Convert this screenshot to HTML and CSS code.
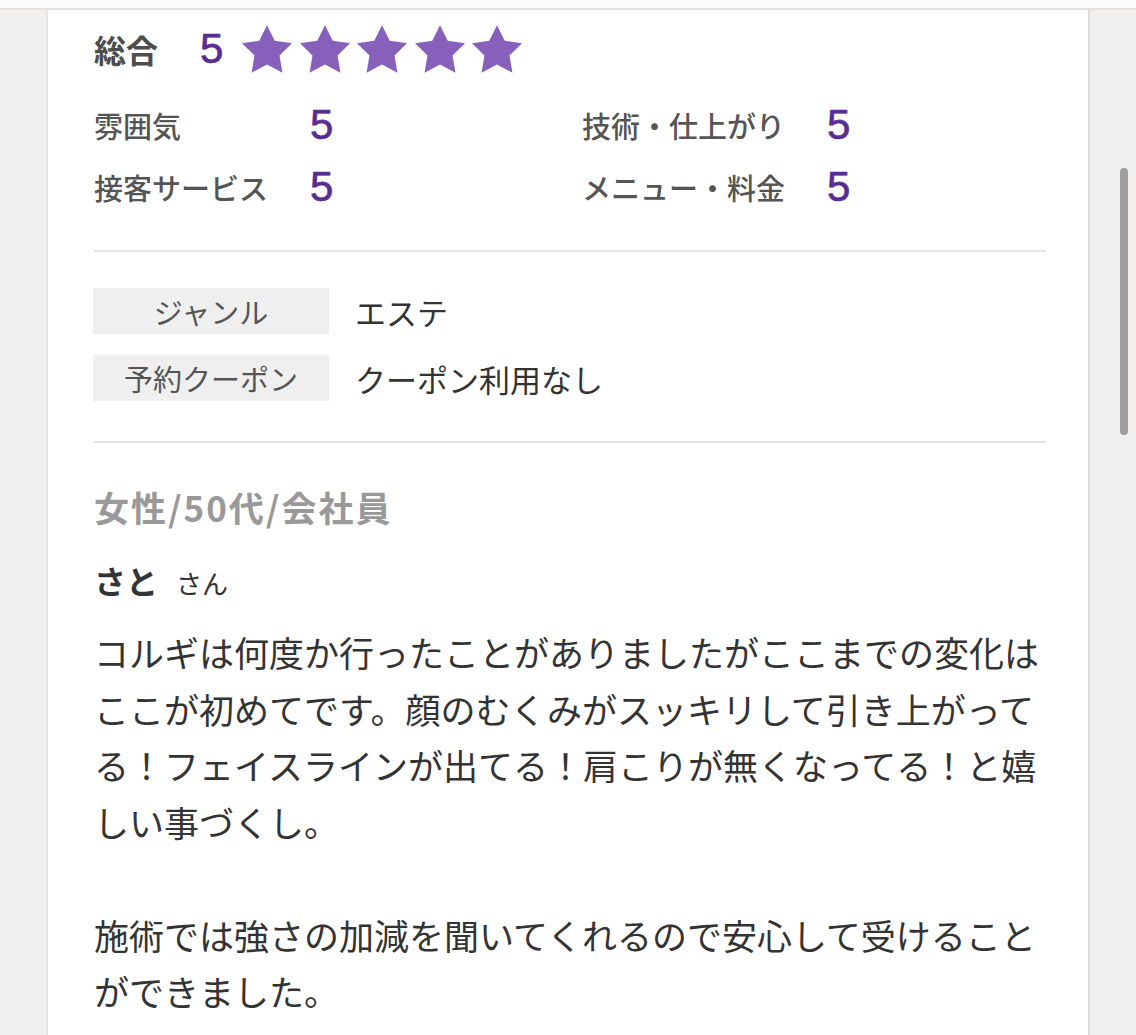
FILE: index.html
```html
<!DOCTYPE html>
<html lang="ja">
<head>
<meta charset="utf-8">
<title>口コミ</title>
<link rel="stylesheet" href="styles.css">
</head>
<body>
<div class="topbar"></div>
<div class="frame">
  <div class="gutter"></div>
  <main class="card">
    <div class="overall">
      <span class="overall-label">総合</span>
      <span class="score score-overall">5</span>
      <span class="stars">
        <svg class="star" viewBox="2 2 20 19.1"><polygon points="12,2 15.09,8.26 22,9.27 17,14.14 18.18,21.02 12,17.77 5.82,21.02 7,14.14 2,9.27 8.91,8.26"/></svg>
        <svg class="star" viewBox="2 2 20 19.1"><polygon points="12,2 15.09,8.26 22,9.27 17,14.14 18.18,21.02 12,17.77 5.82,21.02 7,14.14 2,9.27 8.91,8.26"/></svg>
        <svg class="star" viewBox="2 2 20 19.1"><polygon points="12,2 15.09,8.26 22,9.27 17,14.14 18.18,21.02 12,17.77 5.82,21.02 7,14.14 2,9.27 8.91,8.26"/></svg>
        <svg class="star" viewBox="2 2 20 19.1"><polygon points="12,2 15.09,8.26 22,9.27 17,14.14 18.18,21.02 12,17.77 5.82,21.02 7,14.14 2,9.27 8.91,8.26"/></svg>
        <svg class="star" viewBox="2 2 20 19.1"><polygon points="12,2 15.09,8.26 22,9.27 17,14.14 18.18,21.02 12,17.77 5.82,21.02 7,14.14 2,9.27 8.91,8.26"/></svg>
      </span>
    </div>
    <div class="subratings">
      <div class="subcol subcol-left">
        <span class="sub-label">雰囲気</span><span class="score">5</span>
        <span class="sub-label">接客サービス</span><span class="score">5</span>
      </div>
      <div class="subcol">
        <span class="sub-label">技術・仕上がり</span><span class="score">5</span>
        <span class="sub-label">メニュー・料金</span><span class="score">5</span>
      </div>
    </div>
    <hr class="divider divider-first">
    <dl class="info">
      <div class="info-row"><dt class="info-label">ジャンル</dt><dd class="info-value">エステ</dd></div>
      <div class="info-row"><dt class="info-label">予約クーポン</dt><dd class="info-value">クーポン利用なし</dd></div>
    </dl>
    <hr class="divider divider-second">
    <p class="profile">女性/50代/会社員</p>
    <p class="reviewer"><span class="reviewer-name">さと</span><span class="reviewer-suffix">さん</span></p>
    <p class="body-text">コルギは何度か行ったことがありましたがここまでの変化はここが初めてです。顔のむくみがスッキリして引き上がってる！フェイスラインが出てる！肩こりが無くなってる！と嬉しい事づくし。<br><br>施術では強さの加減を聞いてくれるので安心して受けることができました。</p>
  </main>
  <div class="rail"><div class="thumb"></div></div>
</div>
</body>
</html>
```
FILE: styles.css
```css
* { box-sizing: border-box; }
html, body {
  margin: 0;
  padding: 0;
  height: 1035px;
  overflow: hidden;
}
body {
  background: #f1f0ef;
  font-family: "Noto Sans CJK JP", "Noto Sans", sans-serif;
  color: #333;
}
.topbar {
  height: 10px;
  background: #fbfbfb;
  border-bottom: 2px solid #e2e2e2;
}
.frame {
  display: flex;
  height: 1025px;
}
.gutter {
  width: 46px;
  flex: none;
}
.card {
  width: 1044px;
  flex: none;
  background: #fff;
  border-left: 2px solid #e4e4e4;
  border-right: 2px solid #dcdcdc;
  padding: 0 42px 0 46px;
}
.rail {
  flex: 1;
  padding: 158px 0 0 30px;
}
.thumb {
  width: 8px;
  height: 267px;
  border-radius: 4px;
  background: #9e9e9e;
}
.overall {
  display: flex;
  align-items: center;
  height: 78px;
}
.overall-label {
  font-size: 32px;
  font-weight: 700;
  color: #4d4d4d;
  width: 106px;
}
.score {
  font-family: "Liberation Sans", Arial, sans-serif;
  font-size: 42px;
  color: #5a2c92;
  line-height: 1;
  -webkit-text-stroke: 0.7px #5a2c92;
}
.score-overall {
  margin-right: 19px;
}
.stars {
  display: flex;
  gap: 7.5px;
}
.star {
  width: 50px;
  height: 48px;
  fill: #8660bb;
  display: block;
}
.subratings {
  display: flex;
  margin-top: 6px;
}
.subcol {
  display: grid;
  grid-template-columns: max-content 1fr;
  grid-auto-rows: 62px;
  column-gap: 42px;
  align-items: center;
}
.subcol-left {
  width: 488px;
  flex: none;
}
.sub-label {
  font-size: 29px;
  font-weight: 500;
  color: #555;
}
.divider {
  border: 0;
  height: 2px;
  background: #e4e4e4;
  margin: 0;
}
.divider-first {
  margin-top: 32px;
}
.info {
  margin: 36px 0 0;
  display: flex;
  flex-direction: column;
  gap: 21px;
}
.info-row {
  display: flex;
  align-items: center;
}
.info-label {
  width: 236px;
  height: 46px;
  background: #efefef;
  color: #555;
  font-size: 29px;
  display: flex;
  align-items: center;
  justify-content: center;
  margin-left: -1px;
}
.info-value {
  margin: 0 0 0 26px;
  font-size: 31px;
  color: #333;
}
.divider-second {
  margin-top: 40px;
}
.profile {
  margin: 42px 0 0;
  height: 44px;
  line-height: 44px;
  font-size: 35px;
  font-weight: 700;
  color: #999;
  letter-spacing: 2px;
}
.reviewer {
  margin: 29px 0 0;
  height: 44px;
  line-height: 44px;
  color: #333;
}
.reviewer-name {
  font-size: 32px;
  font-weight: 700;
  margin-right: 18px;
}
.reviewer-suffix {
  font-size: 26px;
}
.body-text {
  margin: 22px 0 0;
  font-size: 35px;
  line-height: 56.5px;
  color: #333;
  width: 952px;
}
```
